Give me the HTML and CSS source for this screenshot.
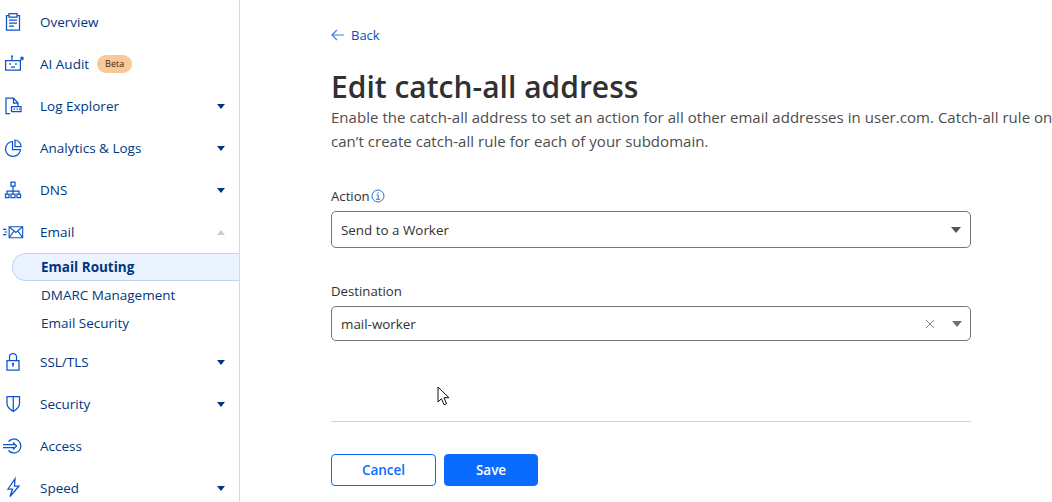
FILE: index.html
```html
<!DOCTYPE html>
<html lang="en">
<head>
<meta charset="utf-8">
<title>Edit catch-all address</title>
<link rel="stylesheet" href="styles.css">
</head>
<body>
<div class="app">
  <nav class="sidebar">
    <a class="nav-item"><svg class="ico" viewBox="0 0 20 20"><path d="M4 3.500H1.500V18h13V3.500H12M4 1.500h8V5H4zM4 8h8M4 11h8M4 14h5"/></svg><span>Overview</span></a>
    <a class="nav-item"><svg class="ico" viewBox="0 0 20 20"><path d="M.6 6.500h14.800V16H.6zM7 6.500V2.500M6 2h2M5 9v2M11 9v2M6 13h4"/><path class="fill" d="M16.500 1.800l.8 1.300 1.500-.3-.5 1.400 1 1.200-1.500.2-.8 1.300-.8-1.300-1.500-.2 1-1.200-.5-1.400 1.500.3z"/></svg><span>AI Audit</span><span class="badge">Beta</span></a>
    <a class="nav-item has-caret"><svg class="ico" viewBox="0 0 20 20"><path d="M5 17.500H1V2h7.500L13 7v3.500M8.500 2v5H13"/><path d="M6.500 10.500H16v5H6.500zM8.500 13H10M11.500 13H13M14 13h1"/></svg><span>Log Explorer</span><i class="caret"></i></a>
    <a class="nav-item has-caret"><svg class="ico" viewBox="0 0 20 20"><path d="M7.500 3.500a7.500 7.500 0 1 0 8 8h-8zM10 2a6.500 6.500 0 0 1 6 6.500h-6z"/></svg><span>Analytics &amp; Logs</span><i class="caret"></i></a>
    <a class="nav-item has-caret"><svg class="ico" viewBox="0 0 20 20"><path d="M6 2h4v4H6zM8 6v5M2 14v-3h12v3M8 11v3M.5 14H4v3.500H.5zM6 14h4v3.500H6zM12 14h3.500v3.500H12z"/></svg><span>DNS</span><i class="caret"></i></a>
    <a class="nav-item has-caret"><svg class="ico wide" viewBox="0 0 24 16"><path d="M7 2h15.500v12.500H7zM7 2l7.700 6.500L22.500 2M7 14.500l5.500-7.500M22.500 14.500l-5.500-7.500M0 5h4M2 8h3M0 11h4"/></svg><span>Email</span><i class="caret up"></i></a>
    <div class="subnav">
      <a class="sub-item active">Email Routing</a>
      <a class="sub-item">DMARC Management</a>
      <a class="sub-item">Email Security</a>
    </div>
    <a class="nav-item has-caret"><svg class="ico" viewBox="0 0 20 20"><path d="M2 8.500h12V18H2zM4.500 8.500V5a3.500 3.500 0 0 1 7 0v3.500"/><path class="fill" d="M6.800 12a1.200 1.200 0 1 1 2.400 0l-.5 1v1.800H7.300V13z"/></svg><span>SSL/TLS</span><i class="caret"></i></a>
    <a class="nav-item has-caret"><svg class="ico" viewBox="0 0 20 20"><path d="M2 2.500h12.500v7c0 3.500-3 6-6.250 8-3.250-2-6.250-4.500-6.250-8zM8.250 2.500v15"/></svg><span>Security</span><i class="caret"></i></a>
    <a class="nav-item"><svg class="ico" viewBox="0 0 20 20"><path d="M3.500 5.500a7 7 0 1 1 0 9M-2 8.500h12M-2 11.500h12M8 6.500l3.500 3.500L8 13.500"/></svg><span>Access</span></a>
    <a class="nav-item has-caret"><svg class="ico" viewBox="0 0 20 20"><path d="M10 .8L3 11h4.500L5 18.500 14 8H9.500z"/></svg><span>Speed</span><i class="caret"></i></a>
  </nav>
  <main class="content">
    <a class="back"><svg class="back-ico" viewBox="0 0 14 12"><path d="M6 1L1 6l5 5M1 6h12"/></svg>Back</a>
    <h1 class="title">Edit catch-all address</h1>
    <p class="desc">Enable the catch-all address to set an action for all other email addresses in user.com. Catch-all rule only<br>can’t create catch-all rule for each of your subdomain.</p>
    <form class="form">
      <div class="field action-field">
        <label class="label">Action<svg class="info" viewBox="0 0 14 14"><circle cx="7" cy="7" r="6"/><path d="M5.500 6h1.700v4M5 10.300h4.200M7 3.200v1.300"/></svg></label>
        <div class="select"><span>Send to a Worker</span><i class="arrow"></i></div>
      </div>
      <div class="field dest-field">
        <label class="label">Destination</label>
        <div class="select short"><span>mail-worker</span><svg class="clear" viewBox="0 0 10 10"><path d="M1 1l8 8M9 1l-8 8"/></svg><i class="arrow"></i></div>
      </div>
      <hr class="rule">
      <div class="actions">
        <button type="button" class="btn ghost">Cancel</button>
        <button type="button" class="btn primary">Save</button>
      </div>
    </form>
    <svg class="cursor" viewBox="0 0 13 20"><path d="M1 1v15l3.500-3.300 2.500 6 2.500-1-2.500-6H12z"/></svg>
  </main>
</div>
</body>
</html>
```
FILE: styles.css
```css
* { box-sizing: border-box; }
html, body { margin: 0; height: 100%; overflow: hidden; background: #fff; }
body { font-family: "Open Sans", "Noto Sans", "Liberation Sans", sans-serif; color: #313131; }
.app { display: flex; height: 502px; overflow: hidden; }

.sidebar { width: 240px; flex: none; border-right: 1px solid #d9d9d9; padding-top: 1px; color: #003681; font-size: 13.5px; }
.nav-item { display: flex; align-items: center; height: 42px; padding-left: 40px; position: relative; }
.ico { position: absolute; left: 5px; top: 11px; width: 20px; height: 20px; fill: none; stroke: #0b55c9; stroke-width: 1.250; overflow: visible; }
.ico .fill { fill: #0b55c9; stroke: none; }
.ico.wide { left: 3px; width: 21px; height: 16px; top: 13px; }
.badge { margin-left: 8px; background: #fbc89a; color: #3c2412; font-size: 9px; line-height: 18px; height: 18px; padding: 0 8px; border-radius: 9px; }
.caret { position: absolute; left: 217px; top: 19px; width: 0; height: 0; border: 4px solid transparent; border-top: 5px solid #003681; border-bottom: 0; }
.caret.up { border-top: 0; border-bottom: 5px solid #c4ccd6; }
.subnav { display: flex; flex-direction: column; margin-bottom: 4px; }
.sub-item { display: flex; align-items: center; height: 28px; margin-left: 12px; padding-left: 29px; }
.sub-item.active { background: #eaf3ff; border: 1px solid #bcd6f7; border-right: 0; border-radius: 14px 0 0 14px; font-weight: 700; padding-left: 28px; }

.content { flex: 1; min-width: 0; padding: 26px 0 0 91px; position: relative; overflow: hidden; }
.back { display: flex; align-items: center; gap: 6px; height: 18px; color: #0051c3; font-size: 13px; }
.back-ico { width: 14px; height: 12px; fill: none; stroke: #3f7fd6; stroke-width: 1.200; }
.title { margin: 24px 0 0; font-size: 30px; line-height: 37px; font-weight: 600; color: #313131; white-space: nowrap; }
.desc { margin: 0; font-size: 15px; letter-spacing: .04px; line-height: 24px; color: #4d4d4d; white-space: nowrap; }
.form { width: 640px; margin-top: 33px; }
.field { display: flex; flex-direction: column; }
.label { display: flex; align-items: center; gap: 1px; height: 20px; font-size: 13.2px; color: #313131; }
.info { width: 14px; height: 14px; fill: none; stroke: #2f73d0; stroke-width: 1; }
.select { display: flex; align-items: center; height: 37px; margin-top: 5px; padding: 0 9px; border: 1px solid #757575; border-radius: 5px; font-size: 13.4px; position: relative; }
.select.short { height: 35px; }
.select span { flex: 1; }
.arrow { width: 0; height: 0; border: 5px solid transparent; border-top: 6px solid #555; border-bottom: 0; }
.select.short .arrow { margin-right: -1px; border-top-color: #707070; }
.clear { width: 10px; height: 10px; margin-right: 17px; fill: none; stroke: #8a8a8a; stroke-width: 1; }
.dest-field { margin-top: 33px; }
.rule { border: 0; border-top: 1px solid #d4d4d4; margin: 80px 0 0; }
.actions { display: flex; gap: 8px; margin-top: 32px; }
.btn { height: 32px; border-radius: 4px; font: 600 13.5px "Open Sans", "Noto Sans", sans-serif; padding: 0; }
.btn.ghost { width: 105px; background: #fff; border: 1px solid #0a6cff; color: #0a6cff; }
.btn.primary { width: 94px; background: #0a6cff; border: 1px solid #0a6cff; color: #fff; }
.cursor { position: absolute; left: 197px; top: 386px; width: 13px; height: 20px; fill: #fff; stroke: #111; stroke-width: 1; }
```
